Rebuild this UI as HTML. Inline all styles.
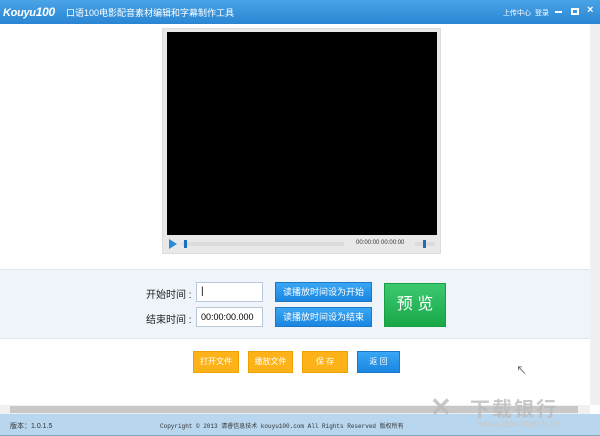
<!DOCTYPE html><html><head><meta charset="utf-8"><style>
*{margin:0;padding:0;box-sizing:border-box}
body{width:600px;height:436px;overflow:hidden;background:#fff;font-family:"Liberation Sans","Noto Sans CJK SC",sans-serif;position:relative}
.a{position:absolute}
.hdr{left:0;top:0;width:600px;height:24px;background:linear-gradient(#4aa3e6,#2a86d4);color:#fff}
.btn{position:absolute;color:#fff;font-size:11px;text-align:center}
.bl{background:linear-gradient(#3aa6f5,#1a86e0);border:1px solid #1a78c8}
.or{background:#fdb21a;border:1px solid #f0a000;font-size:8px;line-height:20px}
.inp{position:absolute;background:#fff;border:1px solid #b9c9d8;font-size:10px;padding-left:4px;line-height:18px}
</style></head><body>
<div class="a hdr">
<div class="a" style="left:3px;top:5px;font-size:11px;font-weight:bold;font-style:italic;letter-spacing:-0.3px">Kouyu<span style="font-size:12px">100</span></div>
<div class="a" style="left:66px;top:6px;font-size:9px">口语100电影配音素材编辑和字幕制作工具</div>
<div class="a" style="left:503px;top:8px;font-size:7px">上传中心 &nbsp;登录</div>
<div class="a" style="left:555px;top:11px;width:7px;height:2px;background:#fff"></div>
<div class="a" style="left:571px;top:8px;width:8px;height:7px;border:2px solid #fff"></div>
<div class="a" style="left:587px;top:4px;font-size:11px;font-weight:bold">×</div>
</div>
<div class="a" style="left:590px;top:24px;width:10px;height:381px;background:#f0f0f0"></div>
<div class="a" style="left:0;top:405px;width:590px;height:9px;background:#f0f0f0"></div>
<div class="a" style="left:10px;top:406px;width:568px;height:7px;background:#c8c8c8"></div>
<div class="a" style="left:162px;top:28px;width:279px;height:226px;background:#e8e8e8;border:1px solid #ddd"></div>
<div class="a" style="left:167px;top:32px;width:270px;height:203px;background:#000"></div>
<div class="a" style="left:169px;top:239px;width:0;height:0;border-left:8px solid #2a8ad8;border-top:5px solid transparent;border-bottom:5px solid transparent"></div>
<div class="a" style="left:182px;top:242px;width:162px;height:4px;background:#dcdcdc"></div>
<div class="a" style="left:184px;top:240px;width:3px;height:8px;background:#1a6fc0"></div>
<div class="a" style="left:356px;top:240px;font-size:6px;color:#333">00:00:00 00:00:00</div>
<div class="a" style="left:415px;top:242px;width:20px;height:4px;background:#dcdcdc"></div>
<div class="a" style="left:423px;top:240px;width:3px;height:8px;background:#1a6fc0"></div>
<div class="a" style="left:0;top:269px;width:590px;height:70px;background:#eef4fa;border-top:1px solid #dde8f2;border-bottom:1px solid #dde8f2"></div>
<div class="a" style="left:146px;top:286px;font-size:10px;color:#222">开始时间 :</div>
<div class="a" style="left:146px;top:311px;font-size:10px;color:#222">结束时间 :</div>
<div class="inp" style="left:196px;top:282px;width:67px;height:20px">|</div>
<div class="inp" style="left:196px;top:307px;width:67px;height:20px;font-size:9px">00:00:00.000</div>
<div class="btn bl" style="left:275px;top:282px;width:97px;height:20px;line-height:18px;font-size:9px">读播放时间设为开始</div>
<div class="btn bl" style="left:275px;top:307px;width:97px;height:20px;line-height:18px;font-size:9px">读播放时间设为结束</div>
<div class="btn" style="left:384px;top:283px;width:62px;height:44px;background:linear-gradient(#3cc870,#18a848);border:1px solid #16a040;font-size:16px;line-height:42px">预 览</div>
<div class="btn or" style="left:193px;top:351px;width:46px;height:22px">打开文件</div>
<div class="btn or" style="left:248px;top:351px;width:45px;height:22px">播放文件</div>
<div class="btn or" style="left:302px;top:351px;width:46px;height:22px">保 存</div>
<div class="btn bl" style="left:357px;top:351px;width:43px;height:22px;font-size:8px;line-height:20px">返 回</div>
<div class="a" style="left:516px;top:362px;font-size:11px;color:#555">↖</div>
<div class="a" style="left:0;top:414px;width:600px;height:22px;background:#b8d6ee;border-bottom:1px solid #8ab"></div>
<div class="a" style="left:430px;top:392px;font-size:26px;color:#bbb;font-weight:bold;opacity:.8">✕</div>
<div class="a" style="left:470px;top:393px;font-size:20px;color:#bbb;font-weight:bold;letter-spacing:2px;opacity:.8">下载银行</div>
<div class="a" style="left:10px;top:421px;font-size:7px;color:#333">版本：1.0.1.5</div>
<div class="a" style="left:160px;top:421px;font-size:6px;color:#333;font-family:'Liberation Mono','Noto Sans CJK SC',monospace">Copyright © 2013 清睿信息技术 kouyu100.com All Rights Reserved 版权所有</div>
<div class="a" style="left:478px;top:419px;font-size:10px;color:#c8c8c8">www.downbank.cn</div>
</body></html>
